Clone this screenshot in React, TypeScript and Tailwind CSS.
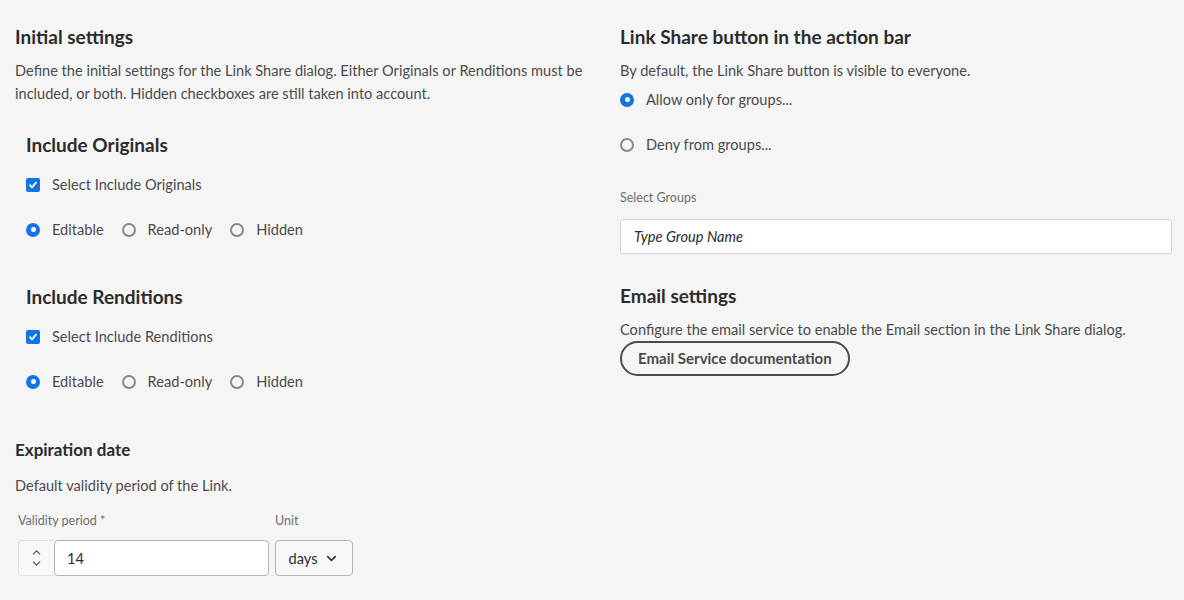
import { ChevronDown, ChevronUp } from 'lucide-react';

function Radio({ checked, label }: { checked?: boolean; label: string }) {
  return (
    <label className="flex items-center gap-3">
      {checked ? (
        <span className="flex h-[14px] w-[14px] items-center justify-center rounded-full bg-[#1473e6]">
          <span className="h-[5px] w-[5px] rounded-full bg-white" />
        </span>
      ) : (
        <span className="h-[14px] w-[14px] rounded-full border-2 border-[#8a8a8a] bg-transparent" />
      )}
      <span>{label}</span>
    </label>
  );
}

function Checkbox({ label }: { label: string }) {
  return (
    <label className="flex items-center gap-3">
      <span className="flex h-[14px] w-[14px] items-center justify-center rounded-[2px] bg-[#1473e6]">
        <svg width="10" height="10" viewBox="0 0 10 10" fill="none">
          <path d="M2 5.2 L4.1 7.3 L8 2.6" stroke="white" strokeWidth="1.8" strokeLinecap="round" strokeLinejoin="round" />
        </svg>
      </span>
      <span>{label}</span>
    </label>
  );
}

function IncludeBlock({ title, check }: { title: string; check: string }) {
  return (
    <div className="pl-[11px]">
      <h3 className="text-[19px] font-bold leading-6 text-[#2c2c2c]">{title}</h3>
      <div className="mt-[16px]">
        <Checkbox label={check} />
      </div>
      <div className="mt-[22px] flex items-center gap-[18px]">
        <Radio checked label="Editable" />
        <Radio label="Read-only" />
        <Radio label="Hidden" />
      </div>
    </div>
  );
}

export default function App() {
  return (
    <div
      className="min-h-[600px] bg-[#f5f5f5] text-[14.6px] leading-[23px] text-[#4b4b4b]"
      style={{ fontFamily: 'Lato, "Noto Sans", sans-serif' }}
    >
      <div className="flex">
        <div className="w-[605px] pl-[15px] pt-[25px]">
          <h2 className="text-[19px] font-bold leading-6 text-[#2c2c2c]">Initial settings</h2>
          <p className="mt-[10px] pr-4">
            Define the initial settings for the Link Share dialog. Either Originals or Renditions must be included, or
            both. Hidden checkboxes are still taken into account.
          </p>
          <div className="mt-[28px]">
            <IncludeBlock title="Include Originals" check="Select Include Originals" />
          </div>
          <div className="mt-[44px]">
            <IncludeBlock title="Include Renditions" check="Select Include Renditions" />
          </div>
          <h3 className="mt-[45px] text-[17px] font-bold leading-6 text-[#2c2c2c]">Expiration date</h3>
          <p className="mt-[12px]">Default validity period of the Link.</p>
          <div className="mt-[15px] flex gap-[6px] pl-[3px]">
            <div>
              <div className="text-[12.5px] leading-[18px] text-[#6e6e6e]">Validity period *</div>
              <div className="mt-[10px] flex h-[36px]">
                <div className="flex w-[36px] flex-col items-center justify-center rounded-l-[4px] border border-r-0 border-[#e1e1e1] bg-[#f8f8f8] text-[#4b4b4b]">
                  <ChevronUp size={13} strokeWidth={2} className="-mb-[1px]" />
                  <ChevronDown size={13} strokeWidth={2} className="-mt-[1px]" />
                </div>
                <div className="flex w-[215px] items-center rounded-[4px] border border-[#b3b3b3] bg-white pl-[12px] text-[#2c2c2c]">
                  14
                </div>
              </div>
            </div>
            <div>
              <div className="text-[12.5px] leading-[18px] text-[#6e6e6e]">Unit</div>
              <div className="mt-[10px] flex h-[36px] w-[78px] items-center justify-center gap-[7px] rounded-[4px] border border-[#b3b3b3] bg-[#f8f8f8] text-[#2c2c2c]">
                days
                <ChevronDown size={15} strokeWidth={2.5} />
              </div>
            </div>
          </div>
        </div>

        <div className="flex-1 pt-[25px] pl-[15px] pr-[12px]">
          <h2 className="text-[19px] font-bold leading-6 text-[#2c2c2c]">Link Share button in the action bar</h2>
          <p className="mt-[10px]">By default, the Link Share button is visible to everyone.</p>
          <div className="mt-[6px]">
            <Radio checked label="Allow only for groups..." />
          </div>
          <div className="mt-[22px]">
            <Radio label="Deny from groups..." />
          </div>
          <div className="mt-[33px] text-[12.5px] leading-[18px] text-[#6e6e6e]">Select Groups</div>
          <div className="mt-[12px] flex h-[35px] items-center rounded-[3px] border border-[#d5d5d5] bg-white pl-[13px] italic text-[#2c2c2c]">
            Type Group Name
          </div>
          <h2 className="mt-[30px] text-[19px] font-bold leading-6 text-[#2c2c2c]">Email settings</h2>
          <p className="mt-[10px]">Configure the email service to enable the Email section in the Link Share dialog.</p>
          <button className="mt-0 h-[35px] rounded-full border-2 border-[#4b4b4b] px-[16px] text-[15px] font-bold text-[#4b4b4b]">
            Email Service documentation
          </button>
        </div>
      </div>
    </div>
  );
}
